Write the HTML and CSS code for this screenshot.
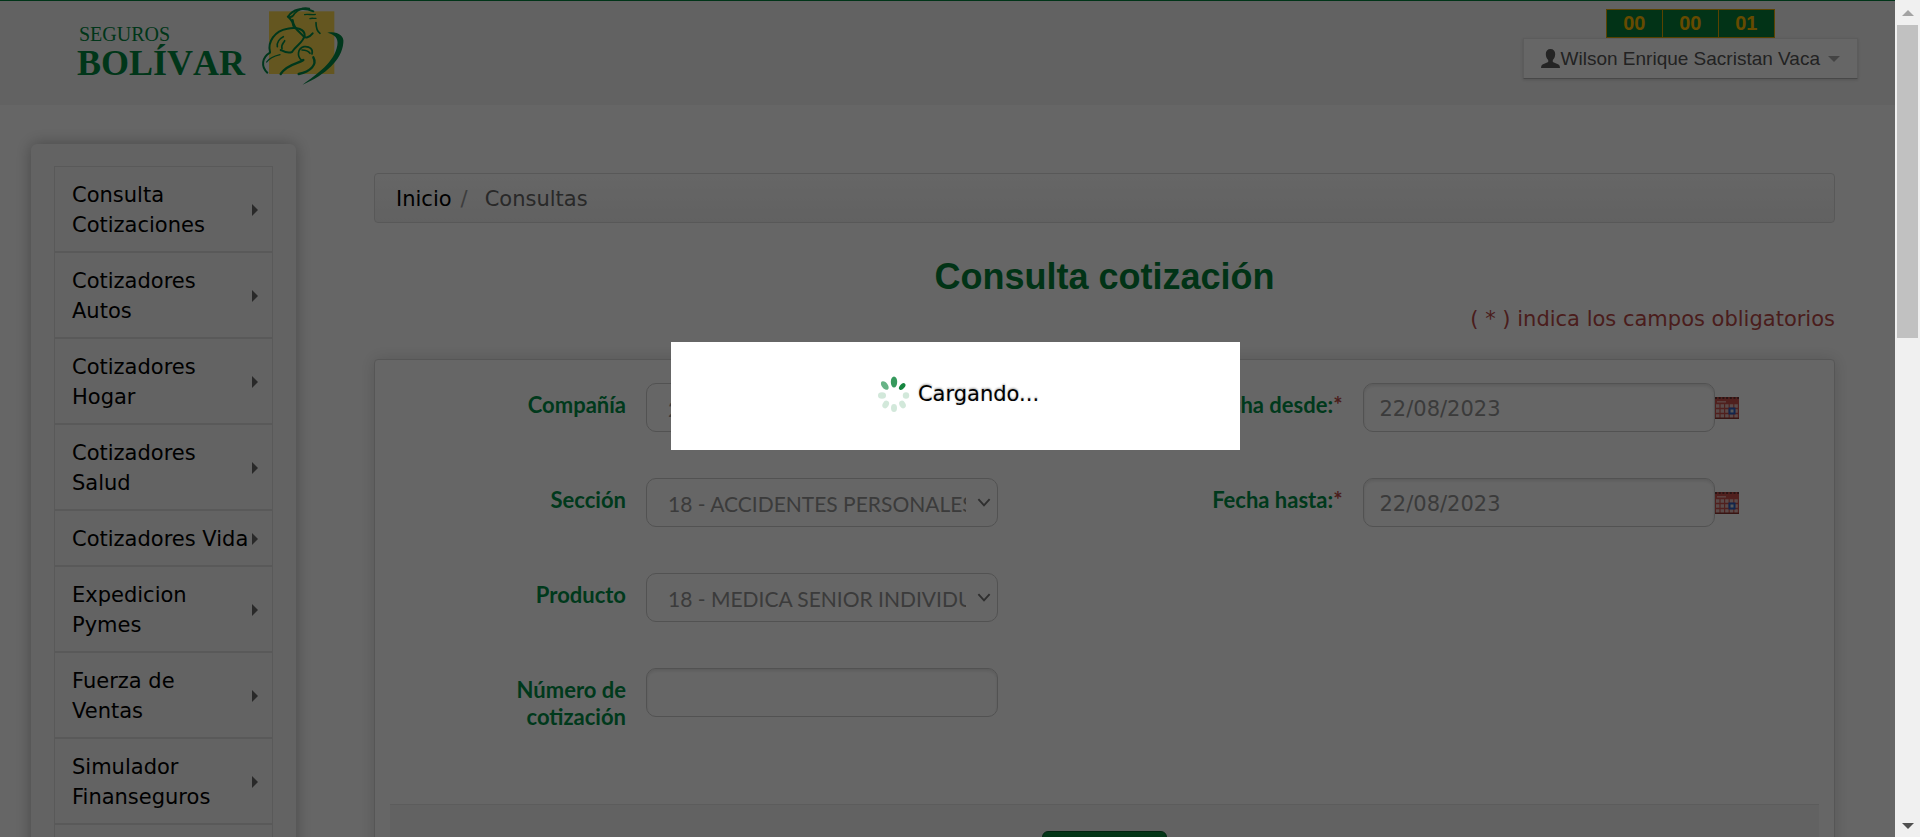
FILE: index.html
```html
<!DOCTYPE html>
<html lang="es">
<head>
<meta charset="utf-8">
<title>Consulta cotización - Seguros Bolívar</title>
<link rel="stylesheet" href="styles.css">
</head>
<body>
<svg class="symbols" aria-hidden="true">
  <symbol id="chevron" viewBox="0 0 12 8"><path d="M1 1l5 5.500 5-5.500" fill="none" stroke="#777" stroke-width="1.700"/></symbol>
  <symbol id="calendar" viewBox="0 0 24 22">
    <rect width="24" height="22" fill="#c8524c"/>
    <path d="M0 1h24" stroke="#6a3330" stroke-width="2" stroke-dasharray="2 1.700"/>
    <path d="M2 4.800h9" stroke="#e9a8a4" stroke-width="1.500"/>
    <path d="M1 9h22M1 14h22M1 19h22" stroke="#e2bcb9" stroke-width="3.400" stroke-dasharray="3.400 1.200"/>
    <rect x="14.500" y="11.500" width="5" height="5" fill="#ddd" stroke="#2f5fc0" stroke-width="2"/>
    <path d="M0 21.300h24" stroke="#8a3531" stroke-width="1.400"/>
  </symbol>
</svg>
<div class="window">
  <div class="page">
    <header class="header">
      <div class="brand">
        <div class="brand-name"><span class="brand-top">SEGUROS</span><span class="brand-bottom">BOLÍVAR</span></div>
        <svg class="brand-mark" viewBox="0 0 282 276" aria-hidden="true">
          <rect x="39" y="34" width="196" height="188" fill="#fad850"/>
          <g fill="none" stroke="#008a48" stroke-linecap="round">
            <path d="M112 78C110 62 104 57 96 50C110 28 140 20 172 34" stroke-width="6"/>
            <path d="M96 50C106 54 112 48 116 40C130 26 146 22 160 26" stroke-width="5"/>
            <path d="M146 44C154 41 168 46 178 43M162 56C168 53 174 56 180 55" stroke-width="4"/>
            <path d="M110 60C112 84 128 94 140 106C148 118 160 112 170 100" stroke-width="6"/>
            <path d="M180 68C180 84 184 94 192 100" stroke-width="5"/>
            <path d="M42 156C34 126 56 92 94 86C124 80 146 88 146 106C142 128 120 136 108 156C94 162 82 154 74 150" stroke-width="6"/>
            <path d="M64 140C62 128 70 116 82 110M78 146C74 134 84 128 86 122" stroke-width="5"/>
            <path d="M42 158C18 172 14 200 34 218" stroke-width="6"/>
            <path d="M74 222C96 190 128 192 142 180" stroke-width="7"/>
            <path d="M138 182C122 170 124 146 144 140C162 138 172 148 168 162M138 150C148 150 158 154 162 160" stroke-width="5"/>
            <path d="M128 222C164 214 184 194 172 172" stroke-width="7"/>
            <path d="M32 186C40 174 56 168 72 164" stroke-width="4"/>
          </g>
          <path d="M214 98C242 92 266 106 262 128C258 180 208 224 140 254C184 222 236 186 244 136C248 114 236 104 214 98Z" fill="#008a48"/>
        </svg>
      </div>
      <div class="account">
        <div class="timer"><span>00</span><span>00</span><span>01</span></div>
        <button class="user" type="button">
          <svg class="user-icon" viewBox="0 0 19 19" aria-hidden="true"><path d="M9.500 0C6.500 0 4.800 2 4.800 5C4.800 8 6 9.800 7.200 11V13L1.500 15.400Q0 16.200 0 19H19Q19 16.200 17.500 15.400L11.800 13V11C13 9.800 14.200 8 14.200 5C14.200 2 12.500 0 9.500 0Z" fill="#5a5a5a"/></svg>
          <span>Wilson Enrique Sacristan Vaca</span>
          <i class="caret"></i>
        </button>
      </div>
    </header>
    <div class="body">
      <nav class="sidebar">
        <ul class="menu">
          <li><a href="#">Consulta Cotizaciones</a></li>
          <li><a href="#">Cotizadores Autos</a></li>
          <li><a href="#">Cotizadores Hogar</a></li>
          <li><a href="#">Cotizadores Salud</a></li>
          <li><a href="#">Cotizadores Vida</a></li>
          <li><a href="#">Expedicion Pymes</a></li>
          <li><a href="#">Fuerza de Ventas</a></li>
          <li><a href="#">Simulador Finanseguros</a></li>
          <li><a href="#">&nbsp;</a></li>
        </ul>
      </nav>
      <main class="main">
        <div class="breadcrumb"><a href="#">Inicio</a><span class="slash">/</span><span class="current">Consultas</span></div>
        <h1 class="title">Consulta cotización</h1>
        <p class="required-note">( * ) indica los campos obligatorios</p>
        <form class="panel">
          <div class="fields">
            <div class="field">
              <label for="compania">Compañía</label>
              <div class="control"><select id="compania"><option>2 - SEGUROS</option></select><svg class="chevron"><use href="#chevron"/></svg></div>
            </div>
            <div class="field">
              <label for="desde">Fecha desde:<em>*</em></label>
              <div class="control"><input id="desde" type="text" value="22/08/2023"></div><svg class="calendar"><use href="#calendar"/></svg>
            </div>
            <div class="field">
              <label for="seccion">Sección</label>
              <div class="control"><select id="seccion"><option>18 - ACCIDENTES PERSONALES</option></select><svg class="chevron"><use href="#chevron"/></svg></div>
            </div>
            <div class="field">
              <label for="hasta">Fecha hasta:<em>*</em></label>
              <div class="control"><input id="hasta" type="text" value="22/08/2023"></div><svg class="calendar"><use href="#calendar"/></svg>
            </div>
            <div class="field first">
              <label for="producto">Producto</label>
              <div class="control"><select id="producto"><option>18 - MEDICA SENIOR INDIVIDUAL</option></select><svg class="chevron"><use href="#chevron"/></svg></div>
            </div>
            <div class="field first">
              <label for="numero">Número de cotización</label>
              <div class="control"><input id="numero" type="text"></div>
            </div>
          </div>
          <div class="actions"><button class="submit" type="button" aria-label="Consultar"></button></div>
        </form>
      </main>
    </div>
    <div class="overlay"></div>
    <div class="loading" role="dialog">
      <svg class="spinner" viewBox="0 0 32 36" preserveAspectRatio="none" aria-hidden="true">
        <g fill="#36995d">
          <ellipse cx="16" cy="6" rx="3.200" ry="5.600"/>
          <ellipse cx="24.200" cy="10.500" rx="2.400" ry="4" transform="rotate(42 24.200 10.500)" fill="#15853f"/>
          <ellipse cx="6.800" cy="9.500" rx="3" ry="5" transform="rotate(-38 6.800 9.500)" opacity=".75"/>
          <g opacity=".22">
            <ellipse cx="4" cy="19.500" rx="4" ry="3.200"/>
            <ellipse cx="28" cy="19.500" rx="3.200" ry="3.200"/>
            <ellipse cx="7.700" cy="28.500" rx="3" ry="4" transform="rotate(30 7.700 28.500)"/>
            <ellipse cx="24.500" cy="28.500" rx="3" ry="4" transform="rotate(-30 24.500 28.500)"/>
            <ellipse cx="16" cy="32" rx="3" ry="4"/>
          </g>
        </g>
      </svg>
      <span>Cargando...</span>
    </div>
  </div>
  <div class="scrollbar" aria-hidden="true">
    <i class="arrow up"></i><div class="track"><div class="thumb"></div></div><i class="arrow down"></i>
  </div>
</div>
</body>
</html>
```
FILE: styles.css
```css
* { box-sizing: border-box; }
body {
  margin: 0;
  background: #fff;
  color: #000;
  font: 21px/30px "DejaVu Sans", Verdana, sans-serif;
}
.symbols { position: absolute; width: 0; height: 0; }
.window { display: flex; height: 100vh; overflow: hidden; }
.page { position: relative; flex: 1; min-width: 0; overflow: hidden; }

.header {
  display: flex;
  justify-content: space-between;
  height: 105px;
  padding: 0 37px 0 77px;
  border-top: 1px solid #00823e;
  background: #f5f5f5;
}
.brand { display: flex; align-items: flex-start; }
.brand-name {
  display: flex;
  flex-direction: column;
  width: 179px;
  padding-top: 22px;
  color: #00873f;
  font-family: "Liberation Serif", serif;
  font-kerning: none;
}
.brand-top { padding-left: 2px; font-size: 20px; line-height: 22px; }
.brand-bottom { font-size: 36px; font-weight: bold; line-height: 36px; }
.brand-mark { width: 94px; height: 92px; margin-top: -1px; }
.account {
  display: flex;
  flex-direction: column;
  align-items: center;
  padding-top: 8px;
  font-family: "Liberation Sans", sans-serif;
}
.timer { display: flex; border: 1px solid #e0a800; background: #05803a; }
.timer span {
  width: 55px;
  color: #fb0;
  font-size: 20px;
  font-weight: bold;
  line-height: 27px;
  text-align: center;
}
.timer span + span { width: 56px; border-left: 1px solid #e0a800; }
.user {
  display: flex;
  align-items: center;
  height: 41px;
  padding: 0 17px;
  border: 1px solid #e6e6e6;
  border-bottom-color: #b3b3b3;
  background: #fff;
  box-shadow: 0 1px 3px rgba(0, 0, 0, .15);
  color: #555;
  font: 19px/22px "Liberation Sans", sans-serif;
}
.user-icon { width: 19px; height: 19px; margin-right: 1px; }
.caret {
  margin-left: 8px;
  border: 6px solid transparent;
  border-top-color: #aaa;
  border-bottom: 0;
}

.body { display: flex; align-items: flex-start; padding: 39px 60px 0 31px; }
.sidebar {
  flex: none;
  width: 265px;
  padding: 22px 23px;
  border-radius: 6px;
  background: #f7f7f7;
  box-shadow: 0 0 16px rgba(0, 0, 0, .3);
}
.menu { margin: 0; padding: 0; list-style: none; }
.menu a {
  display: flex;
  align-items: center;
  justify-content: space-between;
  padding: 13px 14px 11px 17px;
  border: 1px solid #dedede;
  color: #000;
  text-decoration: none;
}
.menu a::after {
  content: "";
  flex: none;
  border: 6px solid transparent;
  border-left-color: #666;
  border-right: 0;
}
.main { flex: 1; min-width: 0; margin: 29px 0 0 78px; }
.breadcrumb {
  display: flex;
  height: 50px;
  padding: 10px 21px 8px;
  border: 1px solid #ddd;
  border-radius: 4px;
  background: linear-gradient(#fff, #f3f3f3);
}
.breadcrumb a { color: #000; text-decoration: none; }
.slash { padding: 0 17px 0 9px; color: #999; }
.current { color: #666; }
.title {
  margin: 33px 0 6px;
  color: #048038;
  font: bold 36px/42px "Liberation Sans", sans-serif;
  text-align: center;
}
.required-note { margin: 0 0 25px; color: #b94a48; text-align: right; }

.panel {
  padding: 23px 15px 0;
  border: 1px solid #d8d8d8;
  border-radius: 4px;
  box-shadow: 0 0 16px rgba(0, 0, 0, .15);
  background: #fff;
}
.fields {
  display: grid;
  grid-template-columns: 1fr 1fr;
  gap: 46px 4px;
}
.field { display: flex; height: 49px; }
.field.first { grid-column: 1; }
.field label {
  width: 236px;
  padding: 8px 0 0 60px;
  color: #009048;
  font: bold 22px/27px Lato, sans-serif;
  text-align: right;
}
.field em { color: #b94a48; font-style: normal; }
.control { position: relative; width: 352px; margin-left: 20px; }
.control input,
.control select {
  width: 100%;
  height: 49px;
  border: 1px solid #ccc;
  border-radius: 10px;
  background: #fff;
  color: #949494;
}
.control input {
  padding: 2px 16px 0;
  font: 21px/30px "DejaVu Sans", Verdana, sans-serif;
  box-shadow: inset 0 2px 3px rgba(0, 0, 0, .1);
}
.control select {
  appearance: none;
  padding: 2px 31px 0 21px;
  font: 21px/30px Lato, sans-serif;
}
.chevron { position: absolute; top: 20px; right: 7px; width: 14px; height: 9px; }
.calendar { flex: none; width: 24px; height: 22px; margin-top: 14px; }
.actions {
  display: flex;
  justify-content: center;
  margin-top: 87px;
  padding: 26px 0 40px;
  border-top: 1px solid #e5e5e5;
  background: #f5f5f5;
}
.submit {
  width: 125px;
  height: 48px;
  border: 1px solid #04602c;
  border-radius: 6px;
  background: linear-gradient(#0a8a3e, #04742f);
}

.overlay { position: absolute; inset: 0; background: rgba(0, 0, 0, .6); }
.loading {
  position: absolute;
  top: 342px;
  left: calc(35% + 8px);
  display: flex;
  align-items: center;
  justify-content: center;
  width: 30%;
  height: 108px;
  padding: 0 0 4px 6px;
  background: #fff;
  text-shadow: 0 -1px 2px rgba(0, 0, 0, .35);
}
.spinner { width: 32px; height: 36px; margin-right: 8px; }

.scrollbar {
  display: flex;
  flex: none;
  flex-direction: column;
  align-items: center;
  width: 25px;
  padding: 10px 2px 8px;
  background: #f0f0f0;
}
.track { align-self: stretch; flex: 1; padding: 9px 0; }
.thumb { height: 313px; background: #c1c1c1; }
.arrow { border: 6px solid transparent; }
.up { border-top: 0; border-bottom-color: #a3a3a3; }
.down { border-bottom: 0; border-top-color: #505050; }
```
